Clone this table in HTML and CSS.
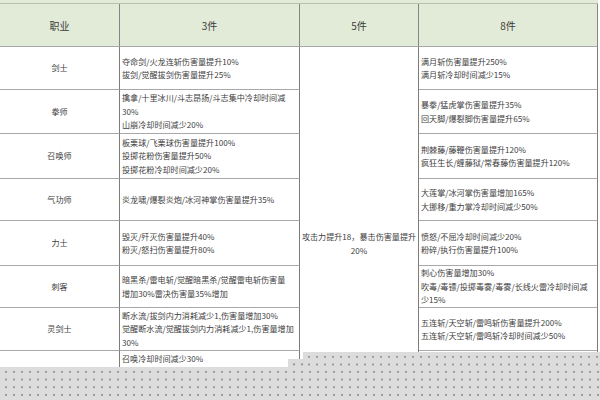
FILE: index.html
```html
<!DOCTYPE html>
<html lang="zh-CN">
<head>
<meta charset="utf-8">
<title>套装效果</title>
<link rel="stylesheet" href="styles.css">
</head>
<body>
<div class="strip"></div>
<table class="grid">
  <colgroup><col class="c1"><col class="c2"><col class="c3"><col class="c4"></colgroup>
  <thead>
    <tr class="head"><th>职业</th><th>3件</th><th>5件</th><th>8件</th></tr>
  </thead>
  <tbody>
    <tr class="r1">
      <td class="job">剑士</td>
      <td>夺命剑/火龙连斩伤害量提升10%<br>拔剑/觉醒拔剑伤害量提升25%</td>
      <td class="five" rowspan="8">攻击力提升18，暴击伤害量提升<br>20%</td>
      <td>满月斩伤害量提升250%<br>满月斩冷却时间减少15%</td>
    </tr>
    <tr class="r2">
      <td class="job">拳师</td>
      <td>擒拿/十里冰川/斗志昂扬/斗志集中冷却时间减<br>30%<br>山崩冷却时间减少20%</td>
      <td>暴拳/猛虎掌伤害量提升35%<br>回天脚/爆裂脚伤害量提升65%</td>
    </tr>
    <tr class="r3">
      <td class="job">召唤师</td>
      <td>板栗球/飞栗球伤害量提升100%<br>投掷花粉伤害量提升50%<br>投掷花粉冷却时间减少20%</td>
      <td>荆棘藤/藤鞭伤害量提升120%<br>疯狂生长/缠藤狱/常春藤伤害量提升120%</td>
    </tr>
    <tr class="r4">
      <td class="job">气功师</td>
      <td>炎龙啸/爆裂炎炮/冰河神掌伤害量提升35%</td>
      <td>大莲掌/冰河掌伤害量增加165%<br>大挪移/重力掌冷却时间减少50%</td>
    </tr>
    <tr class="r5">
      <td class="job">力士</td>
      <td>毁灭/歼灭伤害量提升40%<br>粉灭/怒扫伤害量提升80%</td>
      <td>愤怒/不屈冷却时间减少20%<br>粉碎/执行伤害量提升100%</td>
    </tr>
    <tr class="r6">
      <td class="job">刺客</td>
      <td>暗黑杀/雷电斩/觉醒暗黑杀/觉醒雷电斩伤害量<br>增加30%雷决伤害量35%增加</td>
      <td>刺心伤害量增加30%<br>吹毒/毒镖/投掷毒雾/毒雾/长线火雷冷却时间减<br>少15%</td>
    </tr>
    <tr class="r7">
      <td class="job">灵剑士</td>
      <td>断水流/拔剑内力消耗减少1,伤害量增加30%<br>觉醒断水流/觉醒拔剑内力消耗减少1,伤害量增加<br>30%</td>
      <td>五连斩/天空斩/雷鸣斩伤害量提升200%<br>五连斩/天空斩/雷鸣斩冷却时间减少50%</td>
    </tr>
    <tr class="r8">
      <td class="job"></td>
      <td class="top">召唤冷却时间减少30%</td>
      <td></td>
    </tr>
  </tbody>
</table>
<div class="dots d1"></div>
<div class="dots d2"></div>
<div class="dots d3"></div>
</body>
</html>
```

FILE: styles.css
```css
html, body {
  margin: 0;
  padding: 0;
  background: #ffffff;
  width: 600px;
  height: 400px;
  overflow: hidden;
  position: relative;
}
body {
  font-family: "Noto Sans CJK SC", "Noto Sans", sans-serif;
  color: #404040;
}
.strip {
  height: 3px;
  background: #e2ebd7;
  border-bottom: 1px solid #b8bfb0;
  width: 598px;
}
.grid {
  border-collapse: separate;
  border-spacing: 0;
  table-layout: fixed;
  width: 598px;
}
.c1 { width: 120px; }
.c2 { width: 180px; }
.c3 { width: 119px; }
.c4 { width: 179px; }
.grid th {
  background: #e2ebd7;
  font-weight: normal;
  font-size: 10px;
  color: #3a3a3a;
  height: 42px;
  padding: 0;
  border-right: 1px solid #858585;
  border-bottom: 1px solid #a8a8a8;
  text-align: center;
  vertical-align: middle;
}
.grid td {
  font-size: 8.1px;
  line-height: 13.5px;
  padding: 0 0 0 2px;
  border-right: 1px solid #7c7c7c;
  border-bottom: 1px solid #a8a8a8;
  vertical-align: middle;
  text-align: left;
  white-space: nowrap;
  overflow: hidden;
}
.grid td.job {
  text-align: center;
  padding: 0;
}
.grid td.five {
  text-align: center;
  padding: 0;
}
.grid td.top {
  vertical-align: top;
  padding-top: 1px;
}
.r1 td { height: 42px; }
.r2 td { height: 43px; }
.r3 td { height: 44px; }
.r4 td { height: 41px; }
.r5 td { height: 44px; }
.r6 td { height: 41px; }
.r7 td { height: 42px; }
.r8 td { height: 88px; }
.r8 td.five { height: auto; }
.dots {
  position: absolute;
  background-color: #dcdcdc;
  background-image: radial-gradient(circle, #6e6e6e 0.5px, rgba(110,110,110,0) 1px);
  background-size: 8px 7.7px;
  background-position: 2px 1px;
}
.d1 { left: 0; top: 367px; width: 600px; height: 33px; }
.d2 { left: 303px; top: 352px; width: 297px; height: 15px; }
.d3 { left: 288px; top: 359px; width: 15px; height: 8px; }
```
